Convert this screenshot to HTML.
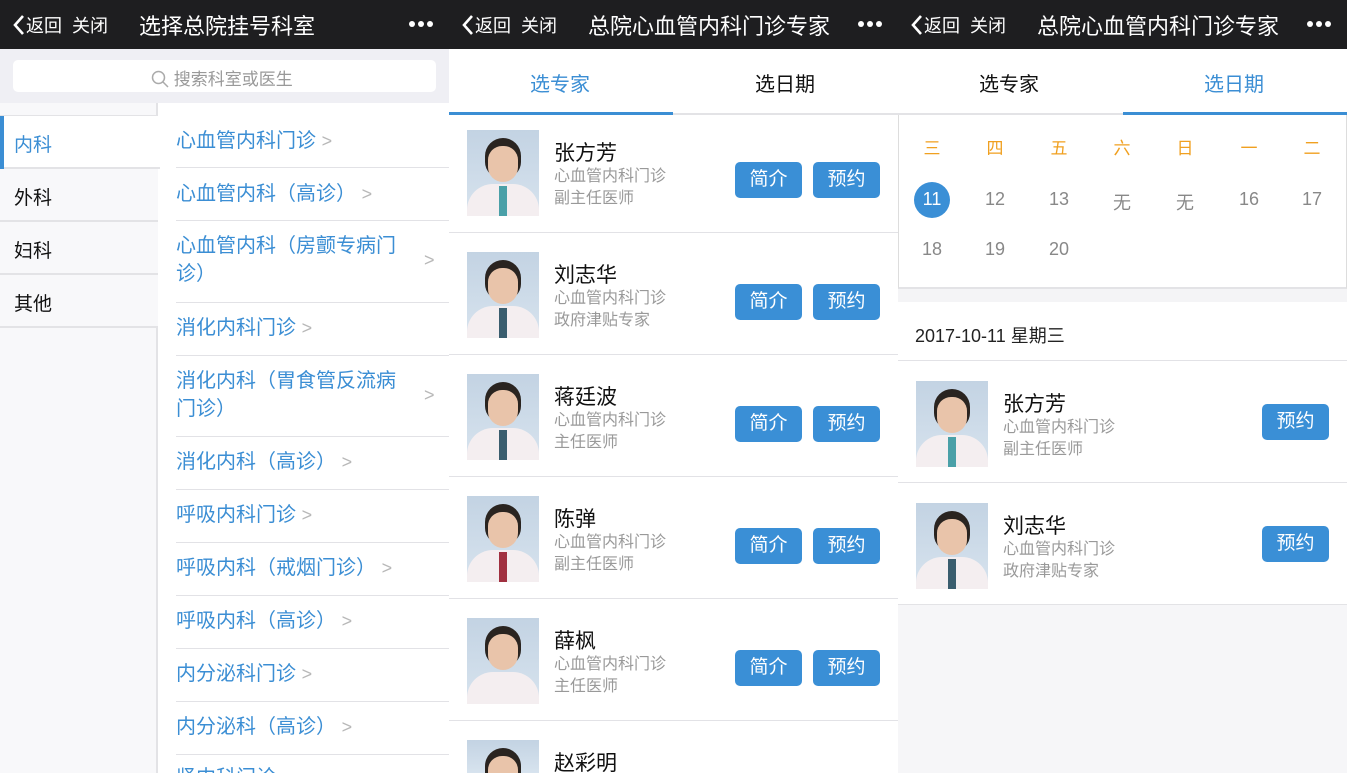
<!DOCTYPE html>
<html><head><meta charset="utf-8"><style>
*{margin:0;padding:0;box-sizing:border-box}
html{width:1347px;height:773px;overflow:hidden}
body{width:1347px;height:773px;overflow:hidden;position:relative;background:#fff;font-family:"Liberation Sans","Noto Sans CJK SC",sans-serif}
.a{position:absolute;white-space:nowrap}
.hdr{position:absolute;top:0;height:49px;background:#1e1e20;color:#fff;overflow:hidden}
.back{position:absolute;left:12px;top:12px;font-size:18px}
.back svg{vertical-align:-4px}
.ttl{position:absolute;top:9px;font-size:22px}
.dots{position:absolute;right:16px;top:21px;height:6px;display:flex}
.dots i{display:block;width:6px;height:6px;border-radius:3px;background:#fff;margin-left:3px}
.li{position:absolute;left:176px;font-size:20px;color:#3b8ed4;line-height:28px}
.ln{position:absolute;height:1px;background:#e2e2e6}
.chev{color:#b8b8b8;font-size:18px}
.lc{position:absolute;left:0;width:158px;height:53px;font-size:19px;color:#111;padding:14px 0 0 14px;border-bottom:2px solid #e3e3e6;background:#f8f8fa}
.ph{position:absolute;width:72px;height:86px;background:linear-gradient(#c3d3e3,#d7e3ee);overflow:hidden}
.ph .h{position:absolute;left:18px;top:8px;width:36px;height:40px;border-radius:18px 18px 16px 16px;background:#2a2420}
.ph .f{position:absolute;left:21px;top:16px;width:30px;height:36px;border-radius:14px 14px 15px 15px;background:#e9c4aa}
.ph .c{position:absolute;left:0;top:54px;width:72px;height:40px;border-radius:26px 26px 0 0;background:#f4eef0}
.ph .t{position:absolute;left:32px;top:56px;width:8px;height:30px;background:#3a5d6e}
.nm{position:absolute;font-size:21px;color:#111}
.sb{position:absolute;font-size:16px;color:#999;line-height:22px}
.bt{position:absolute;width:67px;height:36px;border-radius:5px;background:#3a8fd6;color:#fff;font-size:19px;text-align:center;line-height:36px}
.tab{position:absolute;top:68px;font-size:20px}
.wd{position:absolute;top:134px;font-size:17px;color:#f0a020;width:40px;text-align:center}
.dt{position:absolute;font-size:18px;color:#888;width:40px;text-align:center}
</style></head><body>

<!-- PANEL 1 -->
<div class="hdr" style="left:0;width:449px">
<div class="back"><svg width="14" height="22" viewBox="0 0 14 22"><path d="M11 2 L3 11 L11 20" stroke="#fff" stroke-width="2.6" fill="none"/></svg>返回&nbsp;&nbsp;关闭</div>
<div class="ttl" style="left:139px">选择总院挂号科室</div>
<div class="dots"><i></i><i></i><i></i></div></div>
<div class="a" style="left:0;top:49px;width:449px;height:54px;background:#efeff4"></div>
<div class="a" style="left:13px;top:60px;width:423px;height:32px;background:#fff;border-radius:5px"></div>
<div class="a" style="left:151px;top:65px;font-size:17px;color:#999"><svg width="18" height="18" viewBox="0 0 18 18" style="vertical-align:-3px"><circle cx="7.5" cy="7.5" r="6" stroke="#aaa" stroke-width="1.5" fill="none"/><path d="M12 12 L17 17" stroke="#aaa" stroke-width="1.5"/></svg> 搜索科室或医生</div>
<div class="a" style="left:0;top:103px;width:158px;height:670px;background:#f8f8fa;border-right:2px solid #e3e3e6"></div>
<div class="a" style="left:0;top:103px;width:158px;height:14px;border-bottom:2px solid #e3e3e6"></div>
<div class="lc" style="top:116px;background:#fff;color:#3b8ed4;border-right:none;width:160px">内科</div>
<div class="a" style="left:0;top:116px;width:4px;height:53px;background:#3b8ed4"></div>
<div class="lc" style="top:169px">外科</div>
<div class="lc" style="top:222px">妇科</div>
<div class="lc" style="top:275px">其他</div>

<div class="li" style="top:127px">心血管内科门诊 <span class="chev">&gt;</span></div>
<div class="ln" style="left:176px;width:273px;top:167px"></div>
<div class="li" style="top:180px">心血管内科（高诊） <span class="chev">&gt;</span></div>
<div class="ln" style="left:176px;width:273px;top:220px"></div>
<div class="li" style="top:232px">心血管内科（房颤专病门<br>诊）</div><div class="a chev" style="left:424px;top:250px">&gt;</div>
<div class="ln" style="left:176px;width:273px;top:302px"></div>
<div class="li" style="top:314px">消化内科门诊 <span class="chev">&gt;</span></div>
<div class="ln" style="left:176px;width:273px;top:355px"></div>
<div class="li" style="top:367px">消化内科（胃食管反流病<br>门诊）</div><div class="a chev" style="left:424px;top:385px">&gt;</div>
<div class="ln" style="left:176px;width:273px;top:436px"></div>
<div class="li" style="top:448px">消化内科（高诊） <span class="chev">&gt;</span></div>
<div class="ln" style="left:176px;width:273px;top:489px"></div>
<div class="li" style="top:501px">呼吸内科门诊 <span class="chev">&gt;</span></div>
<div class="ln" style="left:176px;width:273px;top:542px"></div>
<div class="li" style="top:554px">呼吸内科（戒烟门诊） <span class="chev">&gt;</span></div>
<div class="ln" style="left:176px;width:273px;top:595px"></div>
<div class="li" style="top:607px">呼吸内科（高诊） <span class="chev">&gt;</span></div>
<div class="ln" style="left:176px;width:273px;top:648px"></div>
<div class="li" style="top:660px">内分泌科门诊 <span class="chev">&gt;</span></div>
<div class="ln" style="left:176px;width:273px;top:701px"></div>
<div class="li" style="top:713px">内分泌科（高诊） <span class="chev">&gt;</span></div>
<div class="ln" style="left:176px;width:273px;top:754px"></div>
<div class="li" style="top:764px">肾内科门诊</div>

<!-- PANEL 2 -->
<div class="hdr" style="left:449px;width:449px">
<div class="back"><svg width="14" height="22" viewBox="0 0 14 22"><path d="M11 2 L3 11 L11 20" stroke="#fff" stroke-width="2.6" fill="none"/></svg>返回&nbsp;&nbsp;关闭</div>
<div class="ttl" style="left:139px">总院心血管内科门诊专家</div>
<div class="dots"><i></i><i></i><i></i></div></div>
<div class="tab" style="left:530px;color:#3b8ed4">选专家</div>
<div class="tab" style="left:755px;color:#111">选日期</div>
<div class="a" style="left:449px;top:113px;width:449px;height:2px;background:#e3e3e6"></div>
<div class="a" style="left:449px;top:112px;width:224px;height:3px;background:#3b8ed4"></div>

<div class="ph" style="left:467px;top:130px"><div class="c"></div><div class="t" style="background:#4aa0a8"></div><div class="h"></div><div class="f"></div></div>
<div class="nm" style="left:554px;top:137px">张方芳</div><div class="sb" style="left:554px;top:166px">心血管内科门诊<br>副主任医师</div>
<div class="bt" style="left:735px;top:162px">简介</div><div class="bt" style="left:813px;top:162px">预约</div>
<div class="ln" style="left:449px;width:449px;top:232px"></div>

<div class="ph" style="left:467px;top:252px"><div class="c"></div><div class="t"></div><div class="h"></div><div class="f"></div></div>
<div class="nm" style="left:554px;top:259px">刘志华</div><div class="sb" style="left:554px;top:288px">心血管内科门诊<br>政府津贴专家</div>
<div class="bt" style="left:735px;top:284px">简介</div><div class="bt" style="left:813px;top:284px">预约</div>
<div class="ln" style="left:449px;width:449px;top:354px"></div>

<div class="ph" style="left:467px;top:374px"><div class="c"></div><div class="t"></div><div class="h"></div><div class="f"></div></div>
<div class="nm" style="left:554px;top:381px">蒋廷波</div><div class="sb" style="left:554px;top:410px">心血管内科门诊<br>主任医师</div>
<div class="bt" style="left:735px;top:406px">简介</div><div class="bt" style="left:813px;top:406px">预约</div>
<div class="ln" style="left:449px;width:449px;top:476px"></div>

<div class="ph" style="left:467px;top:496px"><div class="c"></div><div class="t" style="background:#a03040"></div><div class="h"></div><div class="f"></div></div>
<div class="nm" style="left:554px;top:503px">陈弹</div><div class="sb" style="left:554px;top:532px">心血管内科门诊<br>副主任医师</div>
<div class="bt" style="left:735px;top:528px">简介</div><div class="bt" style="left:813px;top:528px">预约</div>
<div class="ln" style="left:449px;width:449px;top:598px"></div>

<div class="ph" style="left:467px;top:618px"><div class="c"></div><div class="t" style="background:#f4eef0"></div><div class="h"></div><div class="f"></div></div>
<div class="nm" style="left:554px;top:625px">薛枫</div><div class="sb" style="left:554px;top:654px">心血管内科门诊<br>主任医师</div>
<div class="bt" style="left:735px;top:650px">简介</div><div class="bt" style="left:813px;top:650px">预约</div>
<div class="ln" style="left:449px;width:449px;top:720px"></div>

<div class="ph" style="left:467px;top:740px;height:33px"><div class="h"></div><div class="f"></div></div>
<div class="nm" style="left:554px;top:747px">赵彩明</div>

<!-- PANEL 3 -->
<div class="hdr" style="left:898px;width:449px">
<div class="back"><svg width="14" height="22" viewBox="0 0 14 22"><path d="M11 2 L3 11 L11 20" stroke="#fff" stroke-width="2.6" fill="none"/></svg>返回&nbsp;&nbsp;关闭</div>
<div class="ttl" style="left:139px">总院心血管内科门诊专家</div>
<div class="dots"><i></i><i></i><i></i></div></div>
<div class="tab" style="left:979px;color:#111">选专家</div>
<div class="tab" style="left:1204px;color:#3b8ed4">选日期</div>
<div class="a" style="left:898px;top:113px;width:449px;height:2px;background:#e3e3e6"></div>
<div class="a" style="left:1123px;top:112px;width:224px;height:3px;background:#3b8ed4"></div>
<div class="a" style="left:898px;top:115px;width:449px;height:174px;border:1px solid #ddd;border-top:none;border-bottom:2px solid #e3e3e6"></div>
<div class="wd" style="left:912px">三</div><div class="wd" style="left:975px">四</div><div class="wd" style="left:1039px">五</div><div class="wd" style="left:1102px">六</div><div class="wd" style="left:1165px">日</div><div class="wd" style="left:1229px">一</div><div class="wd" style="left:1292px">二</div>
<div class="a" style="left:914px;top:182px;width:36px;height:36px;border-radius:18px;background:#3a8fd6"></div>
<div class="dt" style="left:912px;top:189px;color:#fff">11</div>
<div class="dt" style="left:975px;top:189px">12</div><div class="dt" style="left:1039px;top:189px">13</div><div class="dt" style="left:1102px;top:189px">无</div><div class="dt" style="left:1165px;top:189px">无</div><div class="dt" style="left:1229px;top:189px">16</div><div class="dt" style="left:1292px;top:189px">17</div>
<div class="dt" style="left:912px;top:239px">18</div><div class="dt" style="left:975px;top:239px">19</div><div class="dt" style="left:1039px;top:239px">20</div>
<div class="a" style="left:898px;top:289px;width:449px;height:13px;background:#f4f4f6"></div>
<div class="a" style="left:915px;top:322px;font-size:18px;color:#222">2017-10-11 星期三</div>
<div class="ln" style="left:898px;width:449px;top:360px"></div>

<div class="ph" style="left:916px;top:381px"><div class="c"></div><div class="t" style="background:#4aa0a8"></div><div class="h"></div><div class="f"></div></div>
<div class="nm" style="left:1003px;top:388px">张方芳</div><div class="sb" style="left:1003px;top:417px">心血管内科门诊<br>副主任医师</div>
<div class="bt" style="left:1262px;top:404px">预约</div>
<div class="ln" style="left:898px;width:449px;top:482px"></div>

<div class="ph" style="left:916px;top:503px"><div class="c"></div><div class="t"></div><div class="h"></div><div class="f"></div></div>
<div class="nm" style="left:1003px;top:510px">刘志华</div><div class="sb" style="left:1003px;top:539px">心血管内科门诊<br>政府津贴专家</div>
<div class="bt" style="left:1262px;top:526px">预约</div>
<div class="a" style="left:898px;top:604px;width:449px;height:169px;background:#f6f6f8;border-top:1px solid #e3e3e6"></div>
</body></html>
